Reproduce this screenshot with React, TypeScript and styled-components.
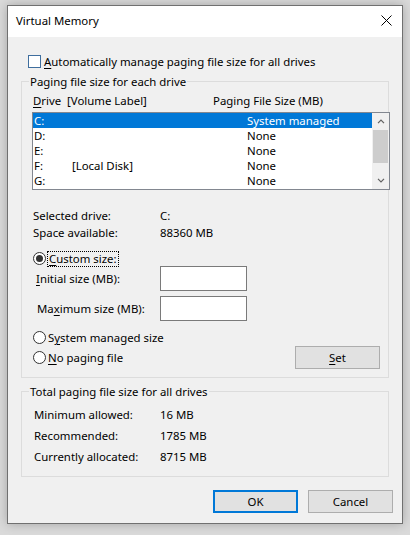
import styled, { createGlobalStyle } from "styled-components";

const GlobalStyle = createGlobalStyle`
  html, body {
    margin: 0;
    padding: 0;
    background: #dadada;
  }
  body {
    font-family: "Segoe UI", "Noto Sans", "Open Sans", sans-serif;
    font-size: 11.4px;
    line-height: 15px;
    color: #000;
  }
`;

// window frame
const Stage = styled.div`
  width: 410px;
  height: 535px;
  padding: 5px 0 0 7px;
  box-sizing: border-box;
`;

const Window = styled.div`
  width: 396px;
  height: 519px;
  box-sizing: border-box;
  border: 1px solid #707070;
  background: #f0f0f0;
  box-shadow: 0 0 10px rgba(0, 0, 0, 0.25);
  display: flex;
  flex-direction: column;
`;

const TitleBar = styled.div`
  height: 31px;
  flex: none;
  background: #fff;
  display: flex;
  align-items: center;
  justify-content: space-between;
  padding: 0 10px 2px 8px;
  box-sizing: border-box;
  font-size: 11.4px;
`;

const Body = styled.div`
  display: flex;
  flex-direction: column;
  padding: 0 9px 0 13px;
`;

const U = styled.span`
  text-decoration: underline;
  text-underline-offset: 2px;
`;

const CheckRow = styled.label`
  display: flex;
  align-items: center;
  gap: 3px;
  margin: 17px 0 0 7px;
  height: 15px;
`;

const CheckBox = styled.span`
  width: 13px;
  height: 13px;
  box-sizing: border-box;
  border: 1px solid #3f6e9e;
  background: #fff;
`;

// group boxes
const Group = styled.fieldset<{ $top: number }>`
  margin: ${(p) => p.$top}px 4px 0 0;
  padding: 0;
  border: 1px solid #dcdcdc;
  min-width: 0;
`;

const Legend = styled.legend`
  margin-left: 7px;
  padding: 0 1px;
  line-height: 15px;
`;

const GroupInner = styled.div<{ $bottom: number }>`
  padding: 0 0 ${(p) => p.$bottom}px 10px;
`;

const HeaderRow = styled.div`
  margin-top: 4px;
  display: grid;
  grid-template-columns: 180px auto;
  padding-left: 1px;
`;

// drive list
const ListBox = styled.div`
  margin-top: 4px;
  width: 358px;
  height: 78px;
  box-sizing: border-box;
  border: 1px solid #828790;
  background: #fff;
  display: flex;
`;

const Rows = styled.div`
  flex: 1;
`;

const DriveRow = styled.div<{ $selected?: boolean }>`
  height: 15px;
  display: grid;
  grid-template-columns: 38px 175px auto;
  padding-left: 1px;
  background: ${(p) => (p.$selected ? "#0078d7" : "transparent")};
  color: ${(p) => (p.$selected ? "#fff" : "#000")};
`;

const ScrollBar = styled.div`
  width: 17px;
  background: #f0f0f0;
  display: flex;
  flex-direction: column;
  align-items: center;
`;

const ScrollArrow = styled.div`
  height: 17px;
  width: 17px;
  display: flex;
  align-items: center;
  justify-content: center;
`;

const Thumb = styled.div`
  width: 15px;
  height: 33px;
  background: #cdcdcd;
`;

const Spacer = styled.div`
  flex: 1;
`;

const InfoGrid = styled.div<{ $top: number; $gap: number; $col: number; $indent: number }>`
  margin-top: ${(p) => p.$top}px;
  display: grid;
  grid-template-columns: ${(p) => p.$col}px auto;
  row-gap: ${(p) => p.$gap}px;
  padding-left: ${(p) => p.$indent}px;
`;

const RadioRow = styled.label<{ $top: number }>`
  margin-top: ${(p) => p.$top}px;
  display: flex;
  align-items: center;
  gap: 2px;
  padding-left: 1px;
  height: 15px;
`;

const Radio = styled.span<{ $checked?: boolean }>`
  width: 13px;
  height: 13px;
  box-sizing: border-box;
  border-radius: 50%;
  border: 1px solid #333;
  background: #fff;
  display: flex;
  align-items: center;
  justify-content: center;
  &::after {
    content: "";
    width: 7px;
    height: 7px;
    border-radius: 50%;
    background: ${(p) => (p.$checked ? "#333" : "transparent")};
  }
`;

const Focus = styled.span`
  outline: 1px dotted #000;
  outline-offset: 0;
  padding: 0 1px;
  line-height: 14px;
`;

const FieldRow = styled.div<{ $top: number; $indent: number }>`
  margin-top: ${(p) => p.$top}px;
  display: grid;
  grid-template-columns: ${(p) => 128 - p.$indent}px 87px;
  align-items: center;
  padding-left: ${(p) => p.$indent}px;
`;

const TextBox = styled.div`
  height: 25px;
  box-sizing: border-box;
  border: 1px solid #7a7a7a;
  background: #fff;
`;

const SetRow = styled.div`
  margin-top: 1px;
  height: 23px;
  display: flex;
  align-items: center;
  justify-content: space-between;
  padding-right: 8px;
`;

const Button = styled.button<{ $default?: boolean }>`
  width: 85px;
  height: 23px;
  box-sizing: border-box;
  font: inherit;
  color: #000;
  background: #e1e1e1;
  border: ${(p) => (p.$default ? "2px solid #0078d7" : "1px solid #adadad")};
  padding: 0;
`;

const ButtonRow = styled.div`
  margin-top: 13px;
  display: flex;
  justify-content: flex-end;
  gap: 10px;
`;

const Chevron = ({ up }: { up?: boolean }) => (
  <svg width="8" height="5" viewBox="0 0 8 5">
    <path
      d={up ? "M1 4.2 L4 1.2 L7 4.2" : "M1 0.8 L4 3.8 L7 0.8"}
      fill="none"
      stroke="#606060"
      strokeWidth="1.2"
    />
  </svg>
);

const drives = [
  { letter: "C:", label: "", size: "System managed" },
  { letter: "D:", label: "", size: "None" },
  { letter: "E:", label: "", size: "None" },
  { letter: "F:", label: "[Local Disk]", size: "None" },
  { letter: "G:", label: "", size: "None" },
];

export default function App() {
  return (
    <>
      <GlobalStyle />
      <Stage>
        <Window>
          <TitleBar>
            <span>Virtual Memory</span>
            <svg width="11" height="11" viewBox="0 0 11 11">
              <path d="M0.5 0.5 L10.5 10.5 M10.5 0.5 L0.5 10.5" stroke="#000" strokeWidth="1" />
            </svg>
          </TitleBar>
          <Body>
            <CheckRow>
              <CheckBox />
              <span>
                <U>A</U>utomatically manage paging file size for all drives
              </span>
            </CheckRow>

            <Group $top={5}>
              <Legend>Paging file size for each drive</Legend>
              <GroupInner $bottom={8}>
                <HeaderRow>
                  <span>
                    <U>D</U>rive&nbsp; [Volume Label]
                  </span>
                  <span>Paging File Size (MB)</span>
                </HeaderRow>
                <ListBox>
                  <Rows>
                    {drives.map((d, i) => (
                      <DriveRow key={d.letter} $selected={i === 0}>
                        <span>{d.letter}</span>
                        <span>{d.label}</span>
                        <span>{d.size}</span>
                      </DriveRow>
                    ))}
                  </Rows>
                  <ScrollBar>
                    <ScrollArrow>
                      <Chevron up />
                    </ScrollArrow>
                    <Thumb />
                    <Spacer />
                    <ScrollArrow>
                      <Chevron />
                    </ScrollArrow>
                  </ScrollBar>
                </ListBox>

                <InfoGrid $top={18} $gap={2} $col={127} $indent={1}>
                  <span>Selected drive:</span>
                  <span>C:</span>
                  <span>Space available:</span>
                  <span>88360 MB</span>
                </InfoGrid>

                <RadioRow $top={11}>
                  <Radio $checked />
                  <Focus>
                    <U>C</U>ustom size:
                  </Focus>
                </RadioRow>
                <FieldRow $top={0} $indent={4}>
                  <span>
                    <U>I</U>nitial size (MB):
                  </span>
                  <TextBox />
                </FieldRow>
                <FieldRow $top={5} $indent={5}>
                  <span>
                    Ma<U>x</U>imum size (MB):
                  </span>
                  <TextBox />
                </FieldRow>
                <RadioRow $top={9}>
                  <Radio />
                  <span>
                    S<U>y</U>stem managed size
                  </span>
                </RadioRow>
                <SetRow>
                  <RadioRow $top={0}>
                    <Radio />
                    <span>
                      <U>N</U>o paging file
                    </span>
                  </RadioRow>
                  <Button>
                    <U>S</U>et
                  </Button>
                </SetRow>
              </GroupInner>
            </Group>

            <Group $top={6}>
              <Legend>Total paging file size for all drives</Legend>
              <GroupInner $bottom={12}>
                <InfoGrid $top={8} $gap={6} $col={126} $indent={2}>
                  <span>Minimum allowed:</span>
                  <span>16 MB</span>
                  <span>Recommended:</span>
                  <span>1785 MB</span>
                  <span>Currently allocated:</span>
                  <span>8715 MB</span>
                </InfoGrid>
              </GroupInner>
            </Group>

            <ButtonRow>
              <Button $default>OK</Button>
              <Button>Cancel</Button>
            </ButtonRow>
          </Body>
        </Window>
      </Stage>
    </>
  );
}
